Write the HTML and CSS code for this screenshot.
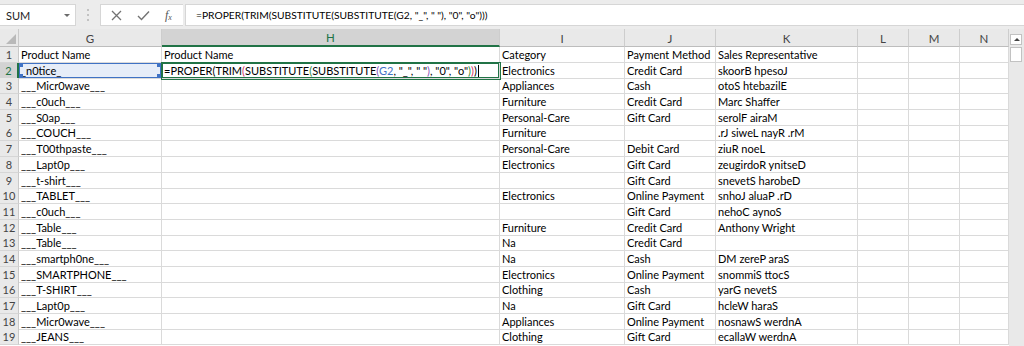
FILE: index.html
```html
<!DOCTYPE html>
<html lang="en">

<head>
    <meta charset="UTF-8">
    <title>Sheet1 - Excel</title>
    <link rel="stylesheet" href="styles.css">
</head>

<body>
    <div class="formula-bar">
        <div class="name-box">
            <span>SUM</span>
            <span class="name-arrow"></span>
        </div>
        <svg class="grip" width="4" height="14" viewBox="0 0 4 14">
            <circle cx="2" cy="2" r="1" fill="#b5b5b5" />
            <circle cx="2" cy="7" r="1" fill="#b5b5b5" />
            <circle cx="2" cy="12" r="1" fill="#b5b5b5" />
        </svg>
        <div class="fx-buttons">
            <svg width="11" height="11" viewBox="0 0 11 11">
                <path d="M1 1L10 10M10 1L1 10" stroke="#737373" stroke-width="1.3" fill="none" />
            </svg>
            <svg width="13" height="11" viewBox="0 0 13 11">
                <path d="M1 6L4.5 9.5L12 1.5" stroke="#737373" stroke-width="1.4" fill="none" />
            </svg>
            <span class="fx">f<sub>x</sub></span>
        </div>
        <div class="formula-input">=PROPER(TRIM(SUBSTITUTE(SUBSTITUTE(G2, "_", " "), "0", "o")))</div>
    </div>

    <div class="sheet">
        <div class="grid">
            <div class="row head-row">
                <div class="corner"><span class="corner-tri"></span></div>
                <div class="col-head">G</div>
                <div class="col-head active">H</div>
                <div class="col-head">I</div>
                <div class="col-head">J</div>
                <div class="col-head">K</div>
                <div class="col-head">L</div>
                <div class="col-head">M</div>
                <div class="col-head">N</div>
            </div>
            <div class="row">
                <div class="row-head">1</div>
                <div class="cell">Product Name</div>
                <div class="cell">Product Name</div>
                <div class="cell">Category</div>
                <div class="cell">Payment Method</div>
                <div class="cell">Sales Representative</div>
                <div class="cell"></div>
                <div class="cell"></div>
                <div class="cell"></div>
            </div>
            <div class="row">
                <div class="row-head active">2</div>
                <div class="cell ref">_n0tice_
                    <span class="handle tl"></span><span class="handle tr"></span>
                    <span class="handle bl"></span><span class="handle br"></span>
                </div>
                <div class="cell editing">=PROPER<span class="p1">(</span>TRIM<span class="p2">(</span>SUBSTITUTE<span class="p3">(</span>SUBSTITUTE<span class="p4">(</span><span class="ref-text">G2</span>, "_", " "<span class="p4">)</span>, "0", "o"<span class="p3">)</span><span class="p2">)</span><span class="p1">)</span><span class="caret"></span></div>
                <div class="cell">Electronics</div>
                <div class="cell">Credit Card</div>
                <div class="cell">skoorB hpesoJ</div>
                <div class="cell"></div>
                <div class="cell"></div>
                <div class="cell"></div>
            </div>
        </div>
        <div class="vscroll">
            <div class="scroll-up"></div>
            <div class="scroll-thumb"></div>
        </div>
    </div>

    <script>
        const rows = [
            ['___Micr0wave___', 'Appliances', 'Cash', 'otoS htebazilE'],
            ['___c0uch___', 'Furniture', 'Credit Card', 'Marc Shaffer'],
            ['___S0ap___', 'Personal-Care', 'Gift Card', 'serolF airaM'],
            ['___COUCH___', 'Furniture', '', '.rJ siweL nayR .rM'],
            ['___T00thpaste___', 'Personal-Care', 'Debit Card', 'ziuR noeL'],
            ['___Lapt0p___', 'Electronics', 'Gift Card', 'zeugirdoR ynitseD'],
            ['___t-shirt___', '', 'Gift Card', 'snevetS harobeD'],
            ['___TABLET___', 'Electronics', 'Online Payment', 'snhoJ aluaP .rD'],
            ['___c0uch___', '', 'Gift Card', 'nehoC aynoS'],
            ['___Table___', 'Furniture', 'Credit Card', 'Anthony Wright'],
            ['___Table___', 'Na', 'Credit Card', ''],
            ['___smartph0ne___', 'Na', 'Cash', 'DM zereP araS'],
            ['___SMARTPHONE___', 'Electronics', 'Online Payment', 'snommiS ttocS'],
            ['___T-SHIRT___', 'Clothing', 'Cash', 'yarG nevetS'],
            ['___Lapt0p___', 'Na', 'Gift Card', 'hcleW haraS'],
            ['___Micr0wave___', 'Appliances', 'Online Payment', 'nosnawS werdnA'],
            ['___JEANS___', 'Clothing', 'Gift Card', 'ecallaW werdnA']
        ];

        const grid = document.querySelector('.grid');
        rows.forEach((r, i) => {
            const row = document.createElement('div');
            row.className = 'row';
            const values = [i + 3, r[0], '', r[1], r[2], r[3], '', '', ''];
            values.forEach((v, j) => {
                const cell = document.createElement('div');
                cell.className = j === 0 ? 'row-head' : 'cell';
                cell.textContent = v;
                row.appendChild(cell);
            });
            grid.appendChild(row);
        });
    </script>
</body>

</html>
```
FILE: styles.css
```css
* {
    box-sizing: border-box;
}

body {
    margin: 0;
    font-family: Lato, "Liberation Sans", sans-serif;
    font-size: 11px;
    color: #000;
    background: #fff;
    overflow: hidden;
}

/* formula bar */

.formula-bar {
    display: flex;
    align-items: center;
    height: 29px;
    padding: 4px 0 3px;
    background: #ececec;
}

.name-box {
    display: flex;
    align-items: center;
    justify-content: space-between;
    width: 76px;
    height: 22px;
    padding: 0 5px 0 6px;
    background: #fff;
    border: 1px solid #d6d6d6;
    border-left: none;
    color: #222;
}

.name-arrow {
    width: 0;
    height: 0;
    border-left: 3px solid transparent;
    border-right: 3px solid transparent;
    border-top: 3px solid #6b6b6b;
}

.grip {
    margin: 0 10px 0 10px;
}

.fx-buttons {
    display: flex;
    align-items: center;
    gap: 15px;
    width: 83px;
    height: 22px;
    padding-left: 10px;
    background: #fff;
    border: 1px solid #d6d6d6;
    border-right: none;
}

.fx {
    font-family: "Liberation Serif", serif;
    font-style: italic;
    font-size: 12px;
    color: #555;
}

.fx sub {
    font-size: 8px;
    vertical-align: -1px;
}

.formula-input {
    flex: 1;
    height: 22px;
    margin-left: 2px;
    padding-left: 10px;
    line-height: 21px;
    font-size: 10.25px;
    background: #fff;
    border: 1px solid #d6d6d6;
    border-right: none;
    white-space: nowrap;
}

/* sheet */

.sheet {
    display: flex;
}

.grid {
    width: 1009px;
}

.row {
    display: grid;
    grid-template-columns: 19px 143px 338px 125px 91px 142px 51px 51px 49px;
    height: 15.7px;
}

.head-row {
    height: 18px;
    background: #e9e9e9;
}

.corner {
    position: relative;
    border-right: 1px solid #c9c9c9;
    border-bottom: 1px solid #bdbdbd;
}

.corner-tri {
    position: absolute;
    right: 2px;
    bottom: 2px;
    width: 0;
    height: 0;
    border-left: 10px solid transparent;
    border-bottom: 10px solid #b9b9b9;
}

.col-head {
    display: flex;
    align-items: center;
    justify-content: center;
    padding-top: 1px;
    color: #444;
    font-size: 11.5px;
    border-right: 1px solid #cdcdcd;
    border-bottom: 1px solid #bdbdbd;
}

.col-head.active {
    background: #d3d3d3;
    color: #217346;
    border-bottom: 2px solid #217346;
}

.row-head {
    text-align: center;
    line-height: 15px;
    color: #444;
    background: #e9e9e9;
    border-right: 1px solid #c9c9c9;
    border-bottom: 1px solid #d6d6d6;
}

.row-head.active {
    background: #d3d3d3;
    color: #217346;
    border-right: 2px solid #217346;
}

.cell {
    position: relative;
    padding-left: 2px;
    line-height: 15px;
    white-space: nowrap;
    border-right: 1px solid #dadada;
    border-bottom: 1px solid #dadada;
}

.cell.ref {
    background: #e6edf8;
    box-shadow: inset 0 0 0 1px #3f72c4;
}

.handle {
    position: absolute;
    width: 4px;
    height: 4px;
    background: #3f72c4;
}

.handle.tl { left: 0; top: 0; }
.handle.tr { right: 0; top: 0; }
.handle.bl { left: 0; bottom: 0; }
.handle.br { right: 0; bottom: 0; }

.cell.editing {
    box-shadow: 0 0 0 1px #217346, inset 0 0 0 1px #217346;
    z-index: 1;
}

.ref-text { color: #3f72c4; }
.p1 { color: #000; }
.p2 { color: #d3306a; }
.p3 { color: #2f8a3e; }
.p4 { color: #8a4fb8; }

.caret {
    display: inline-block;
    width: 1px;
    height: 12px;
    margin-left: 1px;
    vertical-align: -2px;
    background: #000;
}

/* scrollbar */

.vscroll {
    width: 15px;
    height: 317px;
    padding: 5px 2px 0 1px;
    background: #e9e9e9;
}

.scroll-up {
    height: 11px;
    background: #fff;
    border: 1px solid #c2c2c2;
    position: relative;
}

.scroll-up::after {
    content: "";
    position: absolute;
    left: 3px;
    top: 3px;
    border-left: 3px solid transparent;
    border-right: 3px solid transparent;
    border-bottom: 3px solid #444;
}

.scroll-thumb {
    height: 15px;
    margin-top: 2px;
    background: #fff;
    border: 1px solid #c2c2c2;
}
```
